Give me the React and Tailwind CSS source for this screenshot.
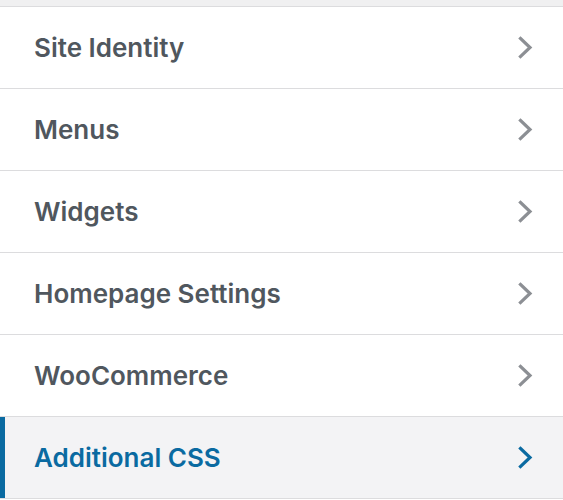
const items = [
  { label: 'Site Identity' },
  { label: 'Menus' },
  { label: 'Widgets' },
  { label: 'Homepage Settings' },
  { label: 'WooCommerce' },
  { label: 'Additional CSS', active: true },
];

const Chevron = ({ className }) => (
  <svg viewBox="0 0 15 23" className={className} fill="none" stroke="currentColor" strokeWidth="3.2" strokeLinecap="square">
    <path d="M2.5 2.5 12 11.5 2.5 20.5" />
  </svg>
);

const App = () => {
  return (
    <div className="w-[563px] h-[500px] bg-white overflow-hidden font-['Inter','Liberation_Sans',sans-serif]">
      <div className="h-[6px] bg-[#f0f0f1] border-b border-[#dcdcde] box-content"></div>
      <ul>
        {items.map((item) => (
          <li
            key={item.label}
            className={
              item.active
                ? 'relative flex items-center justify-between h-[82px] pl-[34px] pr-[30px] border-b border-[#dcdcde] bg-[#f3f3f5] text-[#0a6aa1]'
                : 'relative flex items-center justify-between h-[82px] pl-[34px] pr-[30px] border-b border-[#dcdcde] text-[#50575e]'
            }
          >
            {item.active && <span className="absolute left-0 top-0 bottom-0 w-[5px] bg-[#0a6aa1]"></span>}
            <span className="text-[26px] font-semibold">{item.label}</span>
            <Chevron className={item.active ? 'w-[15px] h-[23px] text-[#0a6aa1]' : 'w-[15px] h-[23px] text-[#8c8f94]'} />
          </li>
        ))}
      </ul>
    </div>
  );
};

export default App;
